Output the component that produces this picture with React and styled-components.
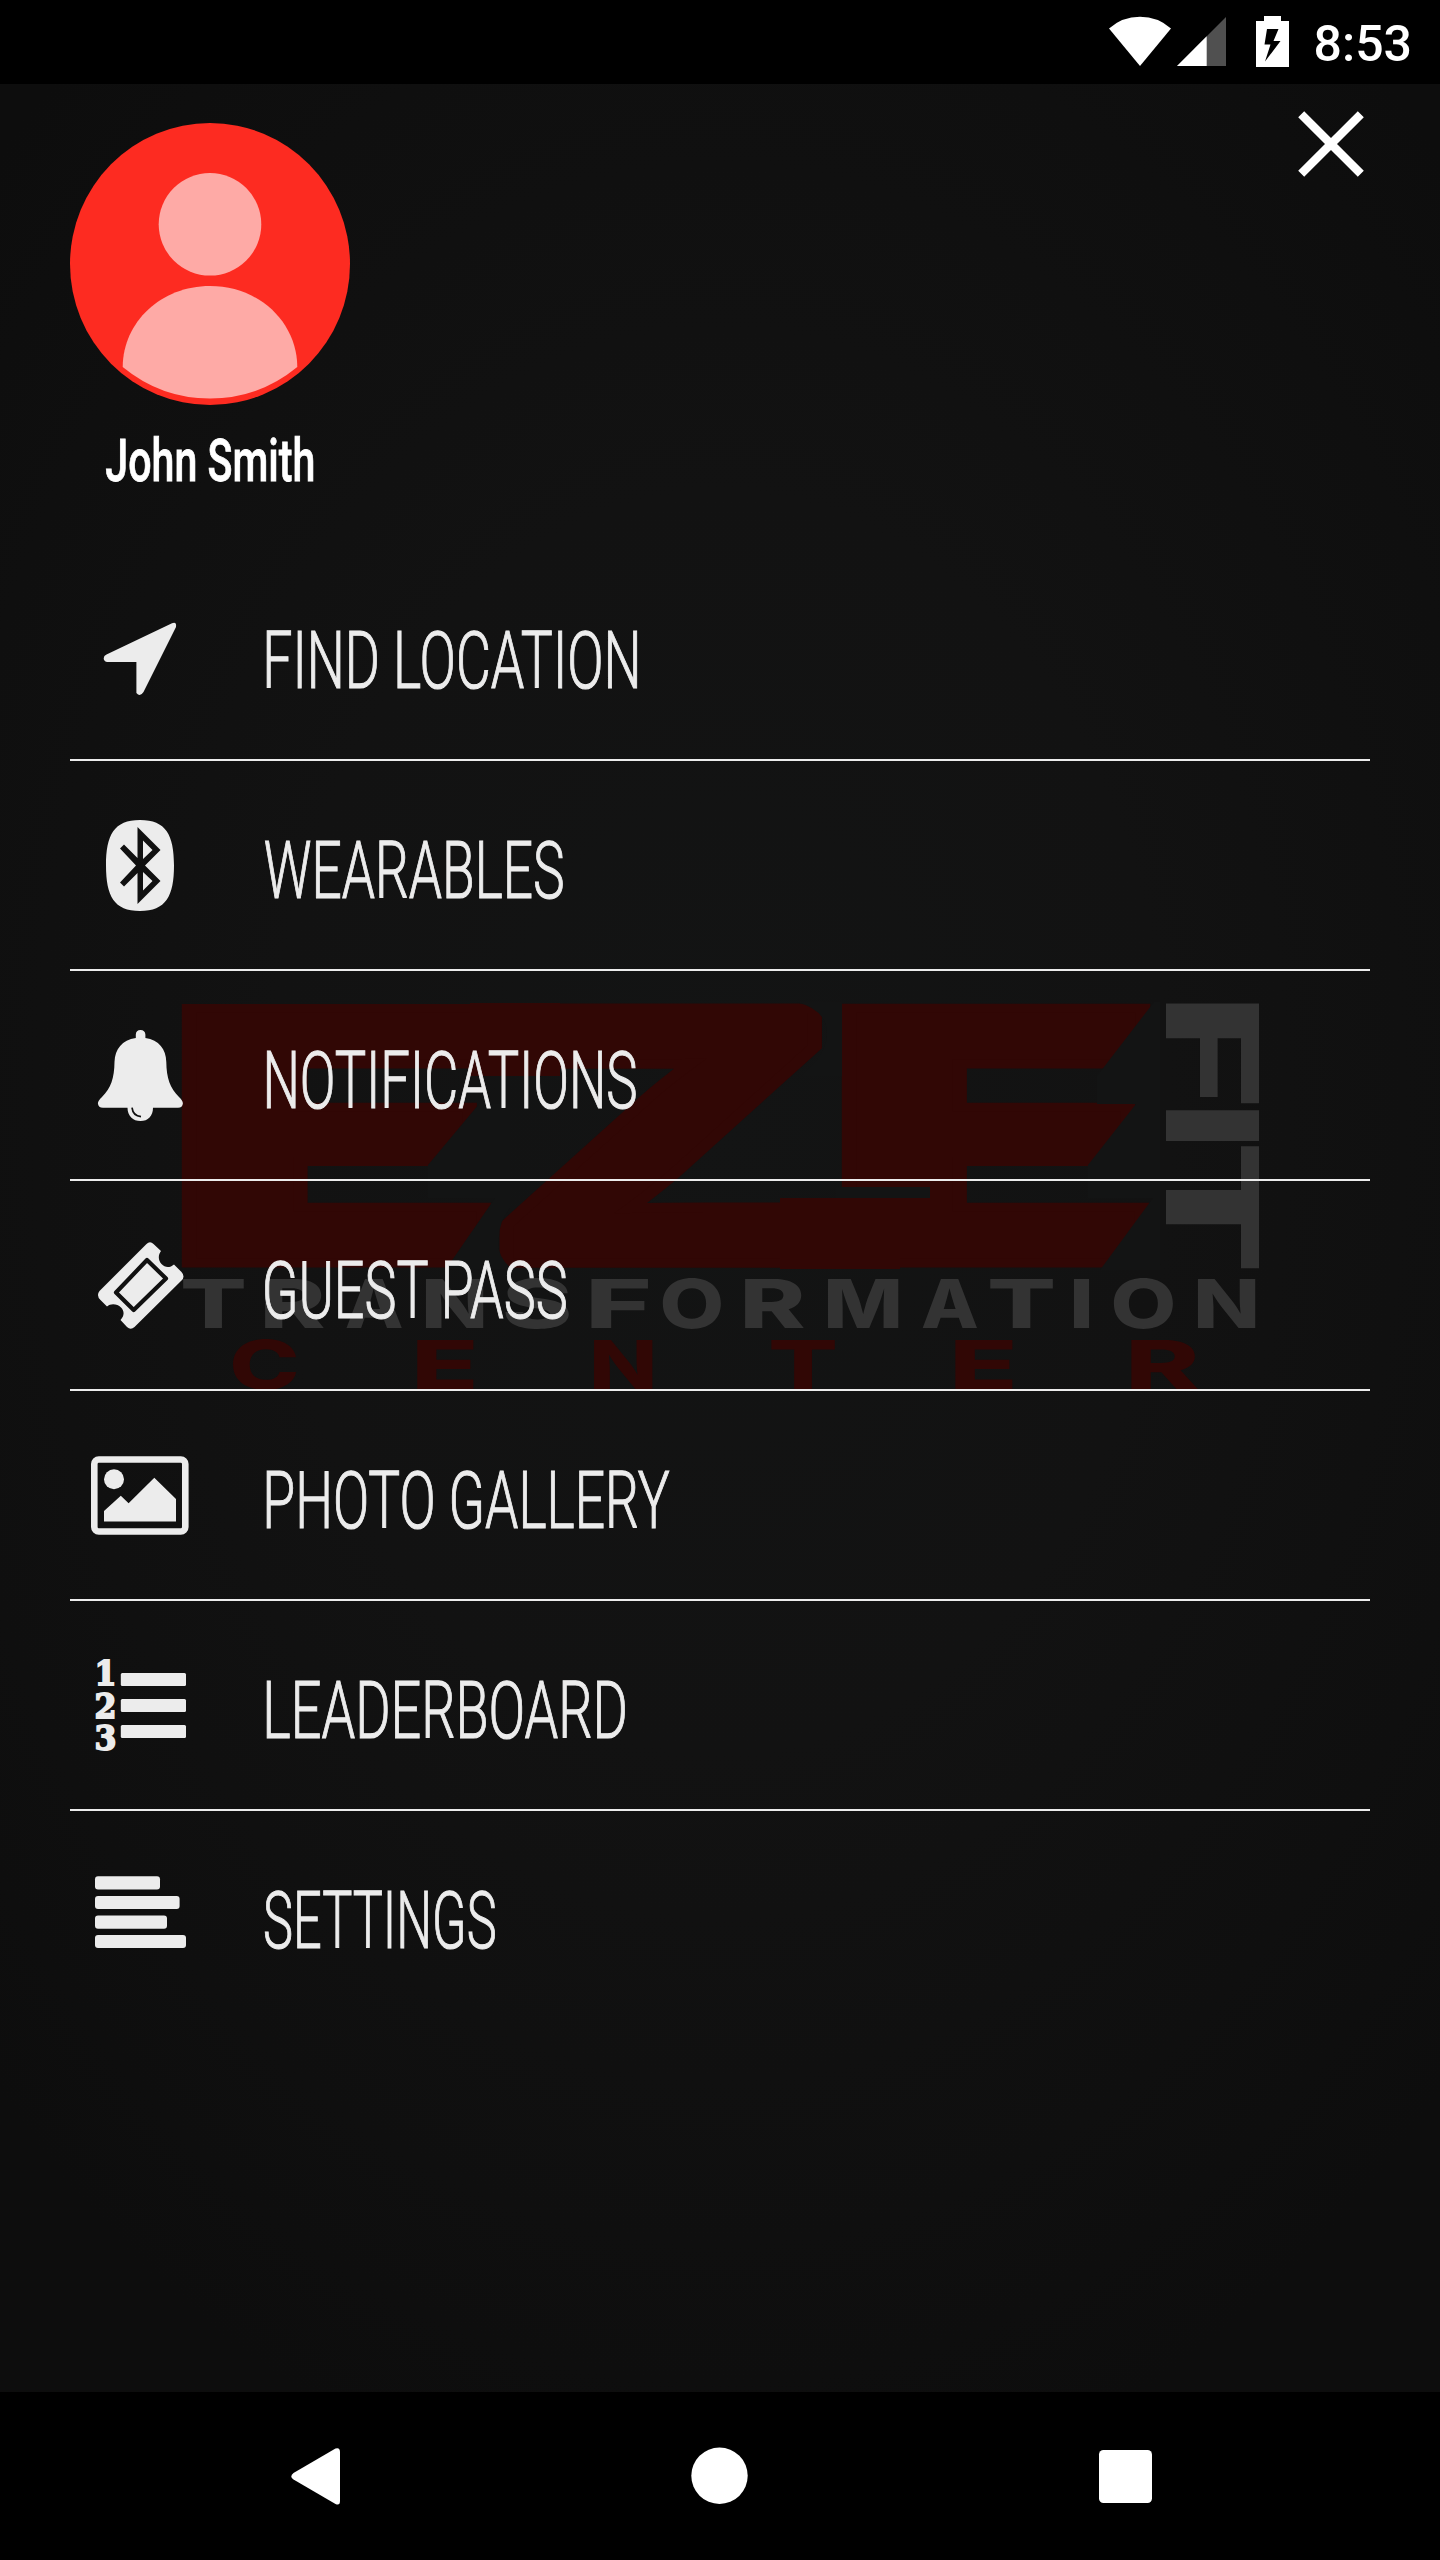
import React, { useLayoutEffect, useRef, useState } from "react"
import styled, { createGlobalStyle } from "styled-components";

const GlobalStyle = createGlobalStyle`
    * { box-sizing: border-box; }
    body { margin: 0; background: #000; font-family: Roboto, "Liberation Sans", sans-serif; }
    svg { display: block; overflow: visible; }
`;

const Screen = styled.div`
    width: 1440px;
    height: 2560px;
    display: flex;
    flex-direction: column;
    background: #000;
    overflow: hidden;
`;

const StatusBar = styled.div`
    height: 84px;
    flex: none;
    display: flex;
    align-items: flex-start;
    justify-content: flex-end;
    padding-right: 28px;
`;

const Clock = styled.span`
    margin-left: 23px;
    padding-top: 14px;
    color: #fff;
    font-size: 50px;
    font-weight: 500;
    line-height: 60px;
`;

const Drawer = styled.main`
    flex: 1;
    position: relative;
    background: radial-gradient(ellipse 1000px 1400px at 50% 45%, #131414 0%, #121212 45%, #0f0f0f 80%, #0d0d0d 100%);
`;

const Watermark = styled.svg`
    position: absolute;
    left: 170px;
    top: 906px;
`;

const Header = styled.header`
    height: 467px;
    display: flex;
    justify-content: space-between;
    align-items: flex-start;
    padding: 27px 76px 0 70px;
`;

const Profile = styled.div`
    padding-top: 12px;
`;

const Name = styled.div`
    margin: 20px 0 0 36px;
    color: #fff;
    font-size: 60px;
    font-weight: 500;
    line-height: 72px;
    -webkit-text-stroke: 0.8px currentColor;
`;

const CloseButton = styled.button`
    border: 0;
    padding: 0;
    background: none;
    cursor: pointer;
`;

const Menu = styled.nav`
    position: relative;
    display: flex;
    flex-direction: column;
    margin: 0 70px;
`;

const MenuItem = styled.a`
    height: 210px;
    display: flex;
    align-items: center;
    gap: 75px;
    padding-left: 20px;
    border-bottom: 2px solid #ececec;
    color: #ececec;

    &:last-child { border-color: transparent; }
`;

const Label = styled.div`
    padding: 11px 0 0 ${({ $inset }) => $inset}px;
    font-size: 80px;
    font-weight: 300;
    line-height: 100px;
    -webkit-text-stroke: 1.1px currentColor;
`;

const Squeezed = styled.span`
    display: inline-block;
    white-space: nowrap;
    transform-origin: left center;
`;

const NavBar = styled.footer`
    height: 168px;
    flex: none;
    display: flex;
    justify-content: space-between;
    padding: 53px 287px 0 289px;
`;

// condense a text so that its ink is exactly `width` pixels wide
const Condensed = ({ width, children }) => {
    const ref = useRef(null);
    const [transform, setTransform] = useState("none");

    useLayoutEffect(() => {
        const css = getComputedStyle(ref.current);
        const ctx = document.createElement("canvas").getContext("2d");
        ctx.font = `${css.fontWeight} ${css.fontSize} ${css.fontFamily}`;
        const m = ctx.measureText(children);
        const left = m.actualBoundingBoxLeft;
        const ratio = width / (left + m.actualBoundingBoxRight);
        setTransform(`scaleX(${ratio}) translateX(${left}px)`);
    }, [width, children]);

    return <Squeezed ref={ref} style={{ transform }}>{children}</Squeezed>
}

const Icon = ({ children }) => (
    <svg width="100" height="100" viewBox="0 0 100 100" fill="currentColor">{children}</svg>
)

const LocationIcon = () => (
    <Icon>
        <path d="M82 18.3Q86.800 16.500 86 22L53.500 87Q50 92.500 46.400 88V57H17.500Q13.700 56.500 13.700 53.200Q13.700 50.600 16.500 49.500Z" />
    </Icon>
)

const BluetoothIcon = () => (
    <Icon>
        <path
            fillRule="evenodd"
            d="M50 5C76 5 84 20 84 50.500C84 81 76 96 50 96C24 96 16 81 16 50.500C16 20 24 5 50 5Z
            M47.500 12V43L34 29.500L30 33.500L46 50.500L30 67.500L34 71.500L47.500 58V89L70.500 66L55 50.500L70.500 35Z
            M53 25.500L62.500 35L53 44Z M53 57L62.500 66L53 75.500Z"
        />
    </Icon>
)

const BellIcon = () => (
    <Icon>
        <path d="M45.800 13V9.500Q46 5 50.500 5T55.400 9.500V13C69 15 76 24 76.300 37C76.500 53 80 63 89 72Q92.900 75.500 92.900 78.500Q92.500 82.700 88 82.700H63C63 91 58 96 50.500 96S37.500 91 37.500 82.700H13Q8.300 82.700 7.900 78.500Q7.900 75.500 12 72C21 63 24.300 53 24.500 37C25 24 32 15 45.800 13Z" />
        <path d="M42 82.700Q43 91 51 91.700" fill="none" stroke="#111" strokeWidth="1.700" />
    </Icon>
)

const TicketIcon = () => (
    <Icon>
        <path d="M56.500 9Q60 5.500 63.500 9L71 16C68 20 68 25 71.500 29S80 33 84 29.500L91.500 37Q95.500 41.500 91.500 45.500L44.500 92Q40.700 95.500 37 92L30.500 85C34.500 81 34.500 76 31 72.500S21 68 17 71.500L10.500 65Q6 60.500 9.500 56Z" />
        <path d="M57 25L76 43.500L43.700 75L26 57.500Z" fill="none" stroke="#111" strokeWidth="4.200" strokeLinejoin="round" />
    </Icon>
)

const PhotoIcon = () => (
    <Icon>
        <rect x="4.300" y="14.500" width="91" height="72" rx="4.500" fill="none" stroke="currentColor" strokeWidth="6.600" />
        <circle cx="24" cy="34.200" r="10" />
        <path d="M14 66L30.800 50.700L38.600 58.300L64.300 32.700L86 54V76.500H14Z" />
    </Icon>
)

const RankIcon = () => (
    <Icon>
        <g fontFamily='"DejaVu Serif", serif' fontWeight="700" fontSize="33.500" stroke="currentColor" strokeWidth="1.800">
            <text x="4.500" y="30.200" textLength="22" lengthAdjust="spacingAndGlyphs">1</text>
            <text x="4.500" y="63" textLength="22" lengthAdjust="spacingAndGlyphs">2</text>
            <text x="4.500" y="94.800" textLength="22" lengthAdjust="spacingAndGlyphs">3</text>
        </g>
        <rect x="30.800" y="18" width="65.200" height="13" rx="1.500" />
        <rect x="30.800" y="44" width="65.200" height="13" rx="1.500" />
        <rect x="30.800" y="70" width="65.200" height="13" rx="1.500" />
    </Icon>
)

const SettingsIcon = () => (
    <Icon>
        <rect x="5" y="11.300" width="65" height="13.300" rx="3" />
        <rect x="5" y="31" width="84.600" height="13" rx="3" />
        <rect x="5" y="50.400" width="72" height="13.300" rx="3" />
        <rect x="5" y="70" width="91" height="13" rx="3" />
    </Icon>
)

const items = [
    { label: "FIND LOCATION", width: 370, inset: 2, icon: LocationIcon },
    { label: "WEARABLES", width: 298, inset: 0, icon: BluetoothIcon },
    { label: "NOTIFICATIONS", width: 369, inset: 2, icon: BellIcon },
    { label: "GUEST PASS", width: 302, inset: 0, icon: TicketIcon },
    { label: "PHOTO GALLERY", width: 402, inset: 2, icon: PhotoIcon },
    { label: "LEADERBOARD", width: 358, inset: 2, icon: RankIcon },
    { label: "SETTINGS", width: 230, inset: 0, icon: SettingsIcon },
];

// one letter per entry: [letter, left, width]
const transformation = [
    ["T", 183, 62], ["R", 264, 61], ["A", 346, 57], ["N", 425, 59], ["S", 505, 64],
    ["F", 590, 58], ["O", 662, 60], ["R", 744, 61], ["M", 827, 72], ["A", 922, 56],
    ["T", 990, 64], ["I", 1073, 17], ["O", 1113, 61], ["N", 1197, 59],
];
const center = [["C", 232, 65], ["E", 416, 58], ["N", 593, 60], ["T", 771, 65], ["E", 954, 59], ["R", 1130, 69]];
const eze = [["E", 189, 300], ["Z", 505, 316], ["E", 849, 298]];
const fit = [["F", 1003, 101], ["I", 1110, 32], ["T", 1146, 123]];

const LogoLetter = ({ letter, x, y, width, size, weight = 800 }) => {
    const ctx = document.createElement("canvas").getContext("2d");
    ctx.font = `${weight} ${size}px Inter`;
    const m = ctx.measureText(letter);
    const ratio = width / (m.actualBoundingBoxLeft + m.actualBoundingBoxRight);

    return (
        <text
            transform={`translate(${x} ${y}) scale(${ratio} 1)`}
            x={m.actualBoundingBoxLeft}
            fontSize={size}
            fontWeight={weight}
            vectorEffect="non-scaling-stroke"
        >{letter}</text>
    )
}

const Logo = () => (
    <Watermark width="1100" height="400" viewBox="170 990 1100 400" fontFamily="Inter, sans-serif">
        <g fill="#310705" stroke="#310705" strokeWidth="12">
            {eze.map(([l, x, w]) => <LogoLetter key={x} letter={l} x={x} y={1263} width={w} size={350} weight={900} />)}
        </g>
        {/* bars that tie the three big letters together */}
        <path d="M470 1003H560V1076H470ZM780 1198H900V1269H780Z" fill="#310705" />
        {/* slanted ends, rounded corners and the gap above the last bar */}
        <g fill="#131414">
            <path d="M479 1104L428 1165V1198H495L446 1269H512Q495 1255 499 1237Q499 1222 510 1208V1104Z" />
            <path d="M796 1002Q828 1010 827 1035Q826 1052 809 1068L800 1076H842V1002Z" />
            <path d="M1154 1002L1097 1076V1104H1136L1088 1165V1198H1153L1100 1270H1160V1002Z" />
            <path d="M836 1187H930V1198H836Z" />
        </g>
        <g fill="#310705">
            {center.map(([l, x, w]) => <LogoLetter key={x} letter={l} x={x} y={1389} width={w} size={67} />)}
        </g>
        <g fill="#333">
            {transformation.map(([l, x, w]) => <LogoLetter key={x} letter={l} x={x} y={1328} width={w} size={67} />)}
            <g transform="translate(1166 0) rotate(90)">
                {fit.map(([l, y, w]) => <LogoLetter key={l} letter={l} x={y} y={0} width={w} size={128} />)}
            </g>
        </g>
    </Watermark>
)

const App = () => {
    return (
        <Screen>
            <GlobalStyle />
            <StatusBar>
                <svg width="182" height="84" viewBox="1110 0 182 84" fill="#fff">
                    <path d="M1110 28.500Q1123 16.700 1141 16.700T1172 28.500L1141 66Z" />
                    <path d="M1227 17V66H1178Z" fill="#505050" />
                    <path d="M1207.700 36.300V66H1178Z" />
                    <path fillRule="evenodd" d="M1265 16H1282V21H1290V67H1257V21H1265ZM1268 29L1265.500 44.500H1271.500L1266 61.500L1281.500 41H1274.500L1279.500 29Z" />
                </svg>
                <Clock>8:53</Clock>
            </StatusBar>

            <Drawer>
                <Logo />
                <Header>
                    <Profile>
                        <svg width="280" height="282" viewBox="0 0 280 282">
                            <ellipse cx="140" cy="141" rx="140" ry="141" fill="#fd2b21" />
                            <circle cx="140" cy="101.300" r="51.300" fill="#feaaa6" />
                            <path d="M52.700 244C53 199 91 163 140 163S227 199 227.300 244Q189 275.500 140 275.500T52.700 244Z" fill="#feaaa6" />
                        </svg>
                        <Name><Condensed width={207}>John Smith</Condensed></Name>
                    </Profile>
                    <CloseButton aria-label="Close">
                        <svg width="66" height="66" viewBox="0 0 66 66" stroke="#fff" strokeWidth="8.500">
                            <path d="M3.200 3.200L62.800 62.800M62.800 3.200L3.200 62.800" />
                        </svg>
                    </CloseButton>
                </Header>

                <Menu>
                    {items.map(({ label, width, inset, icon: ItemIcon }) => (
                        <MenuItem key={label}>
                            <ItemIcon />
                            <Label $inset={inset}><Condensed width={width}>{label}</Condensed></Label>
                        </MenuItem>
                    ))}
                </Menu>
            </Drawer>

            <NavBar>
                <svg width="54" height="62" viewBox="0 0 54 62" fill="#fff">
                    <path d="M46.500 3.500Q51 2 51 7V56Q51 61 46.500 59L4.500 34.500Q0 31.500 4.500 28Z" />
                </svg>
                <svg width="58" height="62" viewBox="0 0 58 62" fill="#fff">
                    <circle cx="27.500" cy="30.700" r="28.200" />
                </svg>
                <svg width="54" height="62" viewBox="0 0 54 62" fill="#fff">
                    <rect x="0" y="5" width="53" height="53" rx="4.500" />
                </svg>
            </NavBar>
        </Screen>
    )
}

export default App;
